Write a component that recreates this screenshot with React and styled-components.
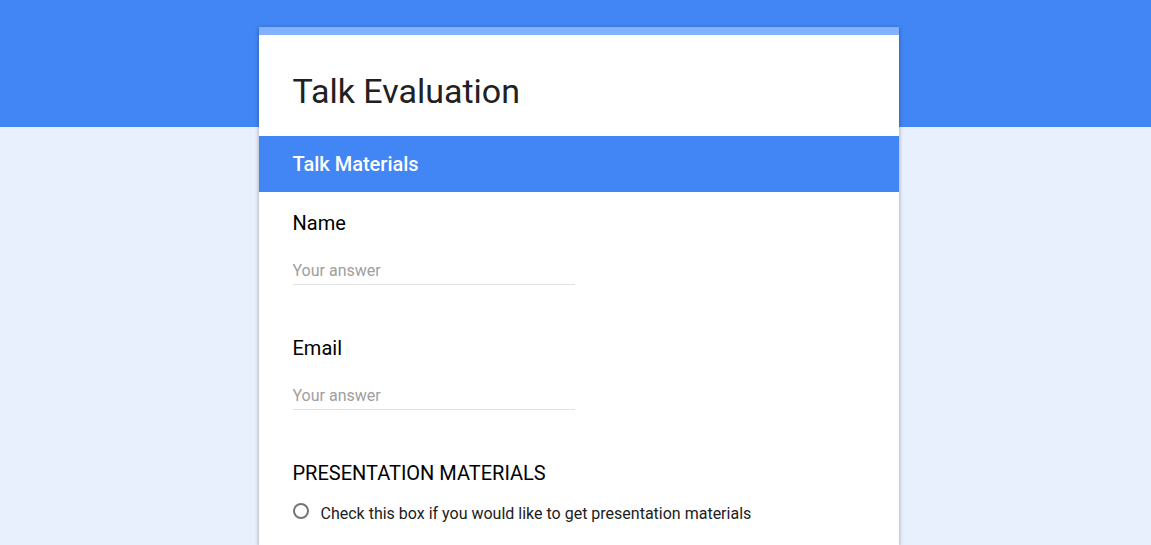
import React from "react";
import styled, { createGlobalStyle } from "styled-components";

const GlobalStyle = createGlobalStyle`
  *, *::before, *::after { box-sizing: border-box; }
  body {
    margin: 0;
    background: #e8effd;
    color: #212121;
    font-family: Roboto, "Liberation Sans", sans-serif;
  }
`;

const Page = styled.main`
  min-height: 100vh;
  padding: 27px 16px 0;
  background: linear-gradient(#4285f4 127px, #e8effd 127px);
  display: flex;
  justify-content: center;
  align-items: stretch;
`;

const Card = styled.form`
  width: 100%;
  max-width: 640px;
  margin-left: 6px;
  background: #fff;
  border-top: 8px solid #82b1ff;
  box-shadow: 0 1px 4px rgba(0, 0, 0, 0.37);
`;

const Title = styled.h1`
  margin: 0;
  padding: 33px 34px 22px;
  font-size: 34px;
  line-height: 46px;
  font-weight: 400;
`;

const SectionTitle = styled.h2`
  margin: 0;
  padding: 16px 34px;
  background: #4285f4;
  color: #fff;
  font-size: 20px;
  line-height: 24px;
  font-weight: 500;
`;

const Questions = styled.div`
  display: flex;
  flex-direction: column;
  gap: 50px;
  padding: 18px 34px;
`;

const Field = styled.div`
  display: flex;
  flex-direction: column;
  align-items: flex-start;
`;

const Label = styled.label`
  margin-bottom: 22px;
  color: #000;
  font-size: 20px;
  line-height: 27px;
`;

const TextInput = styled.input`
  width: 282px;
  max-width: 100%;
  height: 26px;
  padding: 0 0 2px;
  border: 0;
  border-bottom: 1px solid #e0e0e0;
  border-radius: 0;
  outline: none;
  background: transparent;
  color: #212121;
  font: 400 16px/24px Roboto, "Liberation Sans", sans-serif;

  &::placeholder { color: #9e9e9e; opacity: 1; }
  &:focus { border-color: #4285f4; }
`;

const ChoiceGroup = styled.fieldset`
  margin: 0;
  padding: 0;
  border: 0;
  min-width: 0;
`;

const Legend = styled.legend`
  padding: 0;
  margin-bottom: 14px;
  color: #000;
  font-size: 20px;
  line-height: 27px;
`;

const Choice = styled.label`
  display: flex;
  align-items: flex-start;
  gap: 12px;
  font-size: 16px;
  line-height: 26px;
`;

const Radio = styled.input`
  appearance: none;
  flex: none;
  width: 16px;
  height: 16px;
  margin: 2px 0 0;
  border: 2px solid #757575;
  border-radius: 50%;

  &:checked {
    border-color: #4285f4;
    background: radial-gradient(#4285f4 4px, transparent 5px);
  }
`;

function TextQuestion({ id, label, type = "text" }) {
  return (
    <Field>
      <Label htmlFor={id}>{label}</Label>
      <TextInput id={id} name={id} type={type} placeholder="Your answer" />
    </Field>
  );
}

export default function App() {
  return (
    <>
      <GlobalStyle />
      <Page>
        <Card>
          <Title>Talk Evaluation</Title>
          <SectionTitle>Talk Materials</SectionTitle>
          <Questions>
            <TextQuestion id="name" label="Name" />
            <TextQuestion id="email" label="Email" type="email" />
            <ChoiceGroup>
              <Legend>PRESENTATION MATERIALS</Legend>
              <Choice htmlFor="materials">
                <Radio id="materials" name="materials" type="radio" value="yes" />
                <span>Check this box if you would like to get presentation materials</span>
              </Choice>
            </ChoiceGroup>
          </Questions>
        </Card>
      </Page>
    </>
  );
}
